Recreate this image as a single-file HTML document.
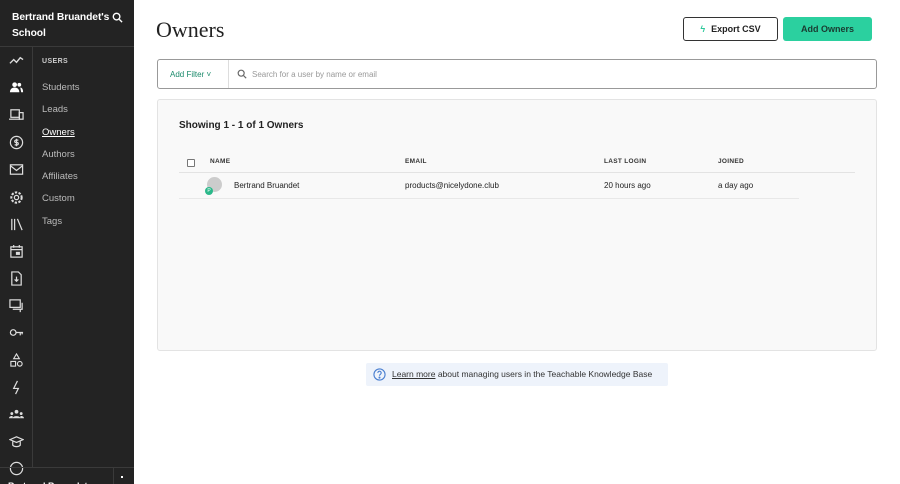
<!DOCTYPE html>
<html><head><style>
*{box-sizing:border-box;margin:0;padding:0}
body{width:900px;height:484px;overflow:hidden;font-family:"Liberation Sans",sans-serif;background:#fff;position:relative}
.sb{position:absolute;left:0;top:0;width:134px;height:484px;background:#232323;color:#fff}
.hd{height:47px;border-bottom:1px solid #3a3a3a;padding:10px 12px;font-weight:bold;font-size:10.3px;line-height:16px;position:relative;letter-spacing:-.1px}
.rail{position:absolute;left:0;top:47px;width:33px;height:420px;border-right:1px solid #3a3a3a}
.rail svg{position:absolute;left:9px;width:15px;height:15px}
.menu{position:absolute;left:42px;top:58px;font-size:9.5px;color:#bbb}
.menu div{height:22.3px}
.ft{position:absolute;bottom:0;left:0;width:134px;height:17px;border-top:1px solid #3a3a3a;overflow:hidden}
.main{position:absolute;left:134px;top:0;right:0;bottom:0}
h1{position:absolute;left:22px;top:17px;font-family:"Liberation Serif",serif;font-weight:normal;font-size:22px;color:#222}
.btn{position:absolute;top:17px;height:24px;border-radius:3px;font-size:9px;font-weight:bold;display:flex;align-items:center;justify-content:center}
.search{position:absolute;left:23px;top:59px;width:720px;height:30px;border:1px solid #999;border-radius:3px;font-size:8px}
.card{position:absolute;left:23px;top:99px;width:720px;height:252px;background:#f9f9f9;border:1px solid #e3e3e3;border-radius:3px}
.th{position:absolute;top:158px;font-size:6.5px;font-weight:bold;color:#333;letter-spacing:.3px}
.td{position:absolute;top:181px;font-size:8px;color:#222}
</style></head><body>
<div class="sb">
 <div class="hd">Bertrand Bruandet's<br>School
  <svg style="position:absolute;right:11px;top:12px" width="11" height="11" viewBox="0 0 12 12" fill="none" stroke="#fff" stroke-width="1.5"><circle cx="5" cy="5" r="3.6"/><path d="M8 8l3 3"/></svg></div>
 <div class="rail">
  <svg style="top:6px" viewBox="0 0 16 16" fill="none" stroke="#ddd" stroke-width="1.5"><path d="M1 11l4-4 3 3 4-5 3 2"/></svg>
  <svg style="top:33px" viewBox="0 0 16 16" fill="#fff"><circle cx="6" cy="5" r="2.5"/><path d="M1 13c0-3 2-5 5-5s5 2 5 5z"/><circle cx="11" cy="5" r="2"/><path d="M12 8c2 0 3 2 3 5h-2z"/></svg>
  <svg style="top:60px" viewBox="0 0 16 16" fill="none" stroke="#ddd" stroke-width="1.3"><rect x="2" y="3" width="9" height="8"/><path d="M0 13h12"/><rect x="11" y="6" width="4" height="7"/></svg>
  <svg style="top:88px" viewBox="0 0 16 16" fill="none" stroke="#ddd" stroke-width="1.3"><circle cx="8" cy="8" r="6.5"/><path d="M10 5.5H7a1.3 1.3 0 000 2.5h2a1.3 1.3 0 010 2.5H6M8 4v8"/></svg>
  <svg style="top:115px" viewBox="0 0 16 16" fill="none" stroke="#ddd" stroke-width="1.3"><rect x="1.5" y="3" width="13" height="10"/><path d="M1.5 4l6.5 5 6.5-5"/></svg>
  <svg style="top:143px" viewBox="0 0 16 16" fill="none" stroke="#ddd" stroke-width="1.3"><circle cx="8" cy="8" r="2.3"/><circle cx="8" cy="8" r="5.5" stroke-dasharray="2.5 1.5" stroke-width="2.2"/></svg>
  <svg style="top:170px" viewBox="0 0 16 16" fill="none" stroke="#ddd" stroke-width="1.3"><path d="M3 2v12M6 2v12M9 2l5 12"/></svg>
  <svg style="top:197px" viewBox="0 0 16 16" fill="none" stroke="#ddd" stroke-width="1.3"><rect x="2" y="3" width="12" height="11"/><path d="M2 6h12M5 1v3M11 1v3"/><rect x="8" y="9" width="3" height="2" fill="#ddd"/></svg>
  <svg style="top:224px" viewBox="0 0 16 16" fill="none" stroke="#ddd" stroke-width="1.3"><path d="M3 1h7l3 3v11H3z"/><path d="M8 6v5M6 9l2 2 2-2"/></svg>
  <svg style="top:251px" viewBox="0 0 16 16" fill="none" stroke="#ddd" stroke-width="1.3"><rect x="1" y="2" width="11" height="8"/><path d="M4 12h10V5M12 12v3"/></svg>
  <svg style="top:278px" viewBox="0 0 16 16" fill="none" stroke="#ddd" stroke-width="1.3"><circle cx="4.5" cy="8" r="3"/><path d="M7.5 8H15M12 8v3M14 8v2"/></svg>
  <svg style="top:306px" viewBox="0 0 16 16" fill="none" stroke="#ddd" stroke-width="1.2"><path d="M8 1l3 5H5z"/><rect x="2" y="9" width="5" height="5"/><circle cx="11.5" cy="11.5" r="2.5"/></svg>
  <svg style="top:333px" viewBox="0 0 16 16" fill="none" stroke="#ddd" stroke-width="1.3"><path d="M9 1L5 9h5l-3 6"/></svg>
  <svg style="top:360px" viewBox="0 0 16 16" fill="#ddd"><circle cx="8" cy="5" r="2"/><circle cx="3" cy="7" r="1.5"/><circle cx="13" cy="7" r="1.5"/><path d="M4 12c0-3 8-3 8 0zM0 12c0-2 3-3 4-2v2zM16 12c0-2-3-3-4-2v2z"/></svg>
  <svg style="top:387px" viewBox="0 0 16 16" fill="none" stroke="#ddd" stroke-width="1.3"><path d="M1 6l7-3 7 3-7 3zM4 8v4c2 2 6 2 8 0V8"/></svg>
  <svg style="top:414px" viewBox="0 0 16 16" fill="none" stroke="#ddd" stroke-width="1.3"><circle cx="8" cy="8" r="6.5"/></svg>
 </div>
 <div class="menu">
  <div style="font-size:7px;font-weight:bold;letter-spacing:.4px;color:#ccc;height:24px">USERS</div>
  <div>Students</div><div>Leads</div><div style="color:#fff;text-decoration:underline">Owners</div><div>Authors</div><div>Affiliates</div><div>Custom</div><div>Tags</div>
 </div>
 <div class="ft"><div style="position:absolute;left:113px;top:0;width:1px;height:17px;background:#3a3a3a"></div><div style="position:absolute;left:121px;top:8px;width:2px;height:2px;background:#fff"></div><div style="position:absolute;left:8px;top:13px;font-size:9px;font-weight:bold">Bertrand Bruandet</div></div>
</div>
<div class="main">
 <h1>Owners</h1>
 <div class="btn" style="left:549px;width:95px;border:1px solid #333;color:#222"><span style="color:#2bc89a;margin-right:6px">ϟ</span>Export CSV</div>
 <div class="btn" style="left:649px;width:89px;background:#2bd09f;color:#1a3a30">Add Owners</div>
 <div class="search">
  <div style="position:absolute;left:12px;top:10px;color:#1b8a6b">Add Filter ˅</div>
  <div style="position:absolute;left:70px;top:0;width:1px;height:28px;background:#ddd"></div>
  <svg style="position:absolute;left:79px;top:9px" width="10" height="10" viewBox="0 0 12 12" fill="none" stroke="#666" stroke-width="1.4"><circle cx="5" cy="5" r="3.6"/><path d="M8 8l3 3"/></svg>
  <div style="position:absolute;left:94px;top:10px;color:#999">Search for a user by name or email</div>
 </div>
 <div class="card"></div>
 <div style="position:absolute;left:45px;top:120px;font-size:10px;font-weight:bold;color:#222">Showing 1 - 1 of 1 Owners</div>
 <div style="position:absolute;left:53px;top:159px;width:8px;height:8px;border:1px solid #777;border-radius:1px;background:#fff"></div>
 <div class="th" style="left:76px">NAME</div><div class="th" style="left:271px">EMAIL</div><div class="th" style="left:470px">LAST LOGIN</div><div class="th" style="left:584px">JOINED</div>
 <div style="position:absolute;left:45px;top:172px;width:676px;height:1px;background:#e3e3e3"></div>
 <div style="position:absolute;left:45px;top:198px;width:620px;height:1px;background:#e8e8e8"></div>
 <div style="position:absolute;left:73px;top:177px;width:15px;height:15px;border-radius:50%;background:#ccc"></div>
 <div style="position:absolute;left:71px;top:187px;width:8px;height:8px;border-radius:50%;background:#2bb88a;color:#fff;font-size:5px;text-align:center;line-height:8px">P</div>
 <div class="td" style="left:100px">Bertrand Bruandet</div><div class="td" style="left:271px">products@nicelydone.club</div><div class="td" style="left:470px">20 hours ago</div><div class="td" style="left:584px">a day ago</div>
 <div style="position:absolute;left:232px;top:363px;width:302px;height:23px;background:#eef3fb;border-radius:2px;font-size:8.5px;color:#333;line-height:23px;padding-left:26px">
  <svg style="position:absolute;left:7px;top:5px" width="13" height="13" viewBox="0 0 14 14" fill="none" stroke="#4a7fd0" stroke-width="1.2"><circle cx="7" cy="7" r="6"/><path d="M5.2 5.3a1.8 1.8 0 113 1.3c-.8.5-1.2.8-1.2 1.7"/><circle cx="7" cy="10.3" r=".5" fill="#4a7fd0"/></svg>
  <u>Learn more</u> about managing users in the Teachable Knowledge Base</div>
</div>
</body></html>
